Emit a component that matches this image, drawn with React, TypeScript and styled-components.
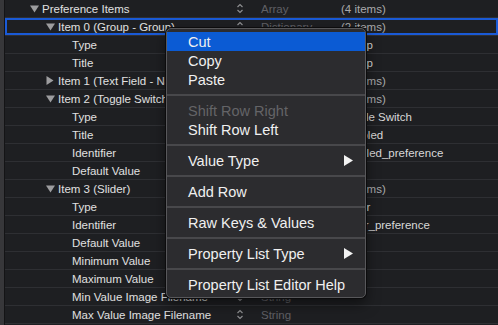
import { FC } from 'react';
import styled, { createGlobalStyle } from 'styled-components';

const GlobalStyle = createGlobalStyle`
  html, body {
    margin: 0;
    padding: 0;
    background: #1e1f22;
    overflow: hidden;
  }
  body {
    font-family: "Liberation Sans", Arial, sans-serif;
  }
`;

type RowKind = 'open' | 'closed' | 'leaf';

type PlistRow = {
  key: string;
  depth: number;
  kind: RowKind;
  type: string;
  value: string;
  isCount?: boolean;
};

const rows: PlistRow[] = [
  { key: 'Preference Items', depth: 0, kind: 'open', type: 'Array', value: '(4 items)', isCount: true },
  { key: 'Item 0 (Group - Group)', depth: 1, kind: 'open', type: 'Dictionary', value: '(2 items)', isCount: true },
  { key: 'Type', depth: 2, kind: 'leaf', type: 'String', value: 'Group' },
  { key: 'Title', depth: 2, kind: 'leaf', type: 'String', value: 'Group' },
  { key: 'Item 1 (Text Field - Name)', depth: 1, kind: 'closed', type: 'Dictionary', value: '(8 items)', isCount: true },
  { key: 'Item 2 (Toggle Switch - Enabled)', depth: 1, kind: 'open', type: 'Dictionary', value: '(4 items)', isCount: true },
  { key: 'Type', depth: 2, kind: 'leaf', type: 'String', value: 'Toggle Switch' },
  { key: 'Title', depth: 2, kind: 'leaf', type: 'String', value: 'Enabled' },
  { key: 'Identifier', depth: 2, kind: 'leaf', type: 'String', value: 'enabled_preference' },
  { key: 'Default Value', depth: 2, kind: 'leaf', type: 'Boolean', value: 'YES' },
  { key: 'Item 3 (Slider)', depth: 1, kind: 'open', type: 'Dictionary', value: '(8 items)', isCount: true },
  { key: 'Type', depth: 2, kind: 'leaf', type: 'String', value: 'Slider' },
  { key: 'Identifier', depth: 2, kind: 'leaf', type: 'String', value: 'slider_preference' },
  { key: 'Default Value', depth: 2, kind: 'leaf', type: 'Number', value: '0.5' },
  { key: 'Minimum Value', depth: 2, kind: 'leaf', type: 'Number', value: '0' },
  { key: 'Maximum Value', depth: 2, kind: 'leaf', type: 'Number', value: '1' },
  { key: 'Min Value Image Filename', depth: 2, kind: 'leaf', type: 'String', value: '' },
  { key: 'Max Value Image Filename', depth: 2, kind: 'leaf', type: 'String', value: '' },
];

type MenuEntry = { label: string; disabled?: boolean; submenu?: boolean; active?: boolean } | 'sep';

const menu: MenuEntry[] = [
  { label: 'Cut', active: true },
  { label: 'Copy' },
  { label: 'Paste' },
  'sep',
  { label: 'Shift Row Right', disabled: true },
  { label: 'Shift Row Left' },
  'sep',
  { label: 'Value Type', submenu: true },
  'sep',
  { label: 'Add Row' },
  'sep',
  { label: 'Raw Keys & Values' },
  'sep',
  { label: 'Property List Type', submenu: true },
  'sep',
  { label: 'Property List Editor Help' },
];

const Window = styled.div`
  position: relative;
  display: flex;
  width: 498px;
  height: 325px;
  overflow: hidden;
`;

const SideStrip = styled.div`
  width: 4px;
  flex: none;
  background: #37373a;
  border-right: 1px solid #141416;
`;

const Table = styled.div`
  flex: 1;
  display: flex;
  flex-direction: column;
`;

const Row = styled.div<{ $focused?: boolean }>`
  box-sizing: border-box;
  height: 18px;
  flex: none;
  display: grid;
  grid-template-columns: 225px 20px 91px 1fr;
  align-items: center;
  border-bottom: 1px solid #2e2f33;
  font-size: 11.5px;
  white-space: nowrap;
  box-shadow: ${(p) => (p.$focused ? 'inset 0 0 0 2px #1a5ad6' : 'none')};
`;

const KeyCell = styled.div<{ $depth: number }>`
  display: flex;
  align-items: center;
  padding-left: ${(p) => 25 + p.$depth * 16}px;
  color: #e0e0e0;
  overflow: hidden;
`;

const Disclosure = styled.span<{ $leaf?: boolean }>`
  width: ${(p) => (p.$leaf ? 10 : 12)}px;
  flex: none;
  display: flex;
  align-items: center;
`;

const Stepper = styled.div`
  display: flex;
  justify-content: center;
  align-items: center;
`;

const TypeCell = styled.div`
  padding-left: 11px;
  color: #606065;
`;

const ValueCell = styled.div<{ $count?: boolean }>`
  color: ${(p) => (p.$count ? '#a9a9ab' : '#d8d8d8')};
`;

const Menu = styled.div`
  position: absolute;
  left: 166px;
  top: 28px;
  width: 200px;
  box-sizing: border-box;
  padding: 3px 0;
  background: #2c2c2f;
  border: 1px solid #58585b;
  border-radius: 5px;
  box-shadow: 0 0 0 1px #0c0c0d, 0 6px 14px rgba(0, 0, 0, 0.5);
  font-size: 14.5px;
`;

const MenuItem = styled.div<{ $active?: boolean; $disabled?: boolean }>`
  height: 19px;
  display: flex;
  align-items: center;
  justify-content: space-between;
  padding: 0 12px 0 21px;
  background: ${(p) => (p.$active ? '#0b5bd4' : 'transparent')};
  color: ${(p) => (p.$disabled ? '#646467' : '#f0f0f0')};
  white-space: nowrap;
`;

const Separator = styled.div`
  height: 12px;
  display: flex;
  align-items: center;
  &::after {
    content: '';
    flex: 1;
    height: 2px;
    background: #48484b;
  }
`;

const TriangleDown: FC = () => (
  <svg width="9" height="8" viewBox="0 0 9 8">
    <path d="M0 0.5 H9 L4.5 7.5 Z" fill="#9d9d9f" />
  </svg>
);

const TriangleRight: FC = () => (
  <svg width="8" height="9" viewBox="0 0 8 9">
    <path d="M0.5 0 V9 L7.5 4.5 Z" fill="#9d9d9f" />
  </svg>
);

const UpDown: FC = () => (
  <svg width="8" height="13" viewBox="0 0 8 13">
    <path d="M1.5 5 L4 2.5 L6.5 5 M1.5 8 L4 10.5 L6.5 8" fill="none" stroke="#8e8e91" strokeWidth="1.2" />
  </svg>
);

const SubmenuArrow: FC = () => (
  <svg width="9" height="11" viewBox="0 0 9 11">
    <path d="M0 0 V11 L9 5.5 Z" fill="#f2f2f2" />
  </svg>
);

export default function App() {
  return (
    <>
      <GlobalStyle />
      <Window>
        <SideStrip />
        <Table>
          {rows.map((r, i) => (
            <Row key={i} $focused={i === 1}>
              <KeyCell $depth={r.depth}>
                <Disclosure $leaf={r.kind === 'leaf'}>
                  {r.kind === 'open' && <TriangleDown />}
                  {r.kind === 'closed' && <TriangleRight />}
                </Disclosure>
                {r.key}
              </KeyCell>
              <Stepper>
                <UpDown />
              </Stepper>
              <TypeCell>{r.type}</TypeCell>
              <ValueCell $count={r.isCount}>{r.value}</ValueCell>
            </Row>
          ))}
        </Table>
        <Menu>
          {menu.map((m, i) =>
            m === 'sep' ? (
              <Separator key={i} />
            ) : (
              <MenuItem key={i} $active={m.active} $disabled={m.disabled}>
                <span>{m.label}</span>
                {m.submenu && <SubmenuArrow />}
              </MenuItem>
            ),
          )}
        </Menu>
      </Window>
    </>
  );
}
